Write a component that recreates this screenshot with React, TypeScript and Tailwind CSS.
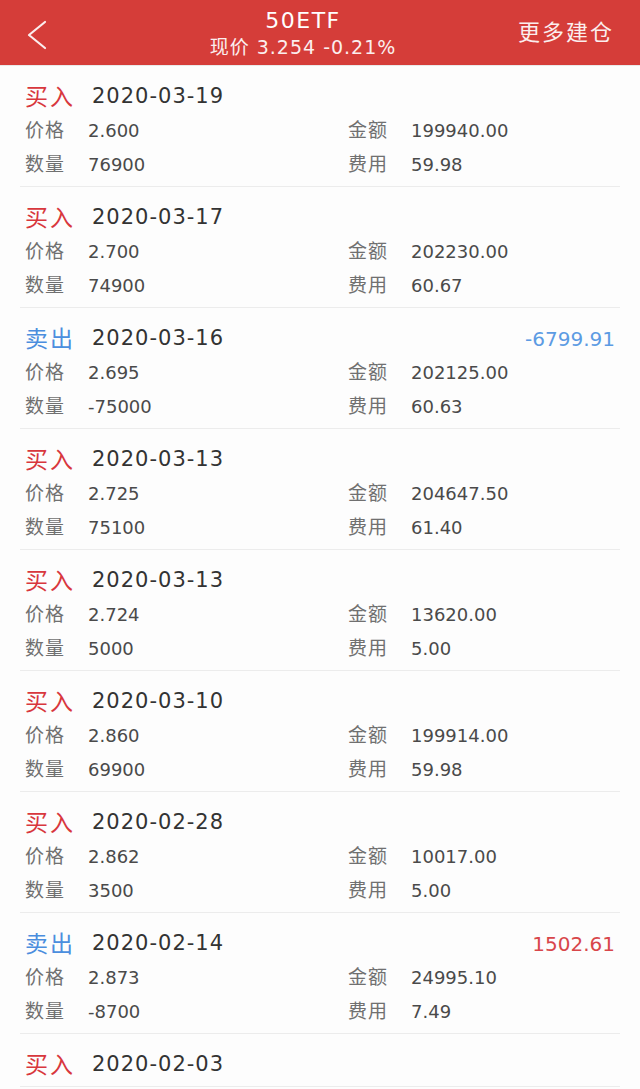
import * as React from "react"

type Trade = {
    side: "buy" | "sell"
    date: string
    price: string
    amount: string
    qty: string
    fee: string
    profit?: string
}

const trades: Trade[] = [
    { side: "buy", date: "2020-03-19", price: "2.600", amount: "199940.00", qty: "76900", fee: "59.98" },
    { side: "buy", date: "2020-03-17", price: "2.700", amount: "202230.00", qty: "74900", fee: "60.67" },
    { side: "sell", date: "2020-03-16", price: "2.695", amount: "202125.00", qty: "-75000", fee: "60.63", profit: "-6799.91" },
    { side: "buy", date: "2020-03-13", price: "2.725", amount: "204647.50", qty: "75100", fee: "61.40" },
    { side: "buy", date: "2020-03-13", price: "2.724", amount: "13620.00", qty: "5000", fee: "5.00" },
    { side: "buy", date: "2020-03-10", price: "2.860", amount: "199914.00", qty: "69900", fee: "59.98" },
    { side: "buy", date: "2020-02-28", price: "2.862", amount: "10017.00", qty: "3500", fee: "5.00" },
    { side: "sell", date: "2020-02-14", price: "2.873", amount: "24995.10", qty: "-8700", fee: "7.49", profit: "1502.61" },
]

// last one is only partly on screen, its fields sit below the fold
const partial: Trade = { side: "buy", date: "2020-02-03", price: "", amount: "", qty: "", fee: "" }

const font = "font-['DejaVu_Sans','Noto_Sans_CJK_SC',sans-serif]"

function Field({ label, value }: { label: string; value: string }) {
    return (
        <div className="flex items-center h-[34px]">
            <span className="w-[63px] text-[19px] tracking-[1px] text-[#707070]">{label}</span>
            <span className="text-[18px] text-[#4a4a4a]">{value}</span>
        </div>
    )
}

function TradeRow({ t, titleOnly }: { t: Trade; titleOnly?: boolean }) {
    const isBuy = t.side === "buy"
    const profitNeg = t.profit?.startsWith("-")
    return (
        <div className="mx-[20px] border-b border-[#ececec]">
            <div className="px-[5px] pt-[16px] pb-[5px]">
                <div className="flex items-center h-[30px] mb-[1px]">
                    <span className={`w-[67px] text-[23px] tracking-[2px] ${isBuy ? "text-[#d8373d]" : "text-[#4b8ede]"}`}>
                        {isBuy ? "买入" : "卖出"}
                    </span>
                    <span className="text-[21px] tracking-[1px] text-[#333333]">{t.date}</span>
                    {t.profit && (
                        <span className={`ml-auto text-[20px] ${profitNeg ? "text-[#5c9be3]" : "text-[#d8464a]"}`}>
                            {t.profit}
                        </span>
                    )}
                </div>
                {!titleOnly && (
                    <div className="grid grid-cols-[323px_1fr]">
                        <Field label="价格" value={t.price} />
                        <Field label="金额" value={t.amount} />
                        <Field label="数量" value={t.qty} />
                        <Field label="费用" value={t.fee} />
                    </div>
                )}
            </div>
        </div>
    )
}

export default function App() {
    return (
        <div className={`w-[640px] h-[1089px] overflow-hidden bg-[#fdfdfd] ${font}`}>
            <div className="relative h-[66px] bg-[#d53d39] border-b border-[#e9e9e9] flex flex-col items-center pr-[34px] text-white">
                <svg className="absolute left-[24px] top-[19px]" width="26" height="32" viewBox="0 0 26 32" fill="none">
                    <path d="M21 3 L5 16 L21 29" stroke="#fbeeee" strokeWidth="2.2" strokeLinecap="round" strokeLinejoin="round" />
                </svg>
                <div className="text-[22px] leading-[26px] pt-[8px] tracking-[1.5px]">50ETF</div>
                <div className="text-[19px] leading-[26px] tracking-[1px] text-[#fbeeee]">现价 3.254 -0.21%</div>
                <div className="absolute right-[26px] top-[20px] text-[22px] leading-[26px] tracking-[2px] text-[#fbeeee]">更多建仓</div>
            </div>
            {trades.map((t, i) => (
                <TradeRow key={i} t={t} />
            ))}
            <TradeRow t={partial} titleOnly />
        </div>
    )
}
